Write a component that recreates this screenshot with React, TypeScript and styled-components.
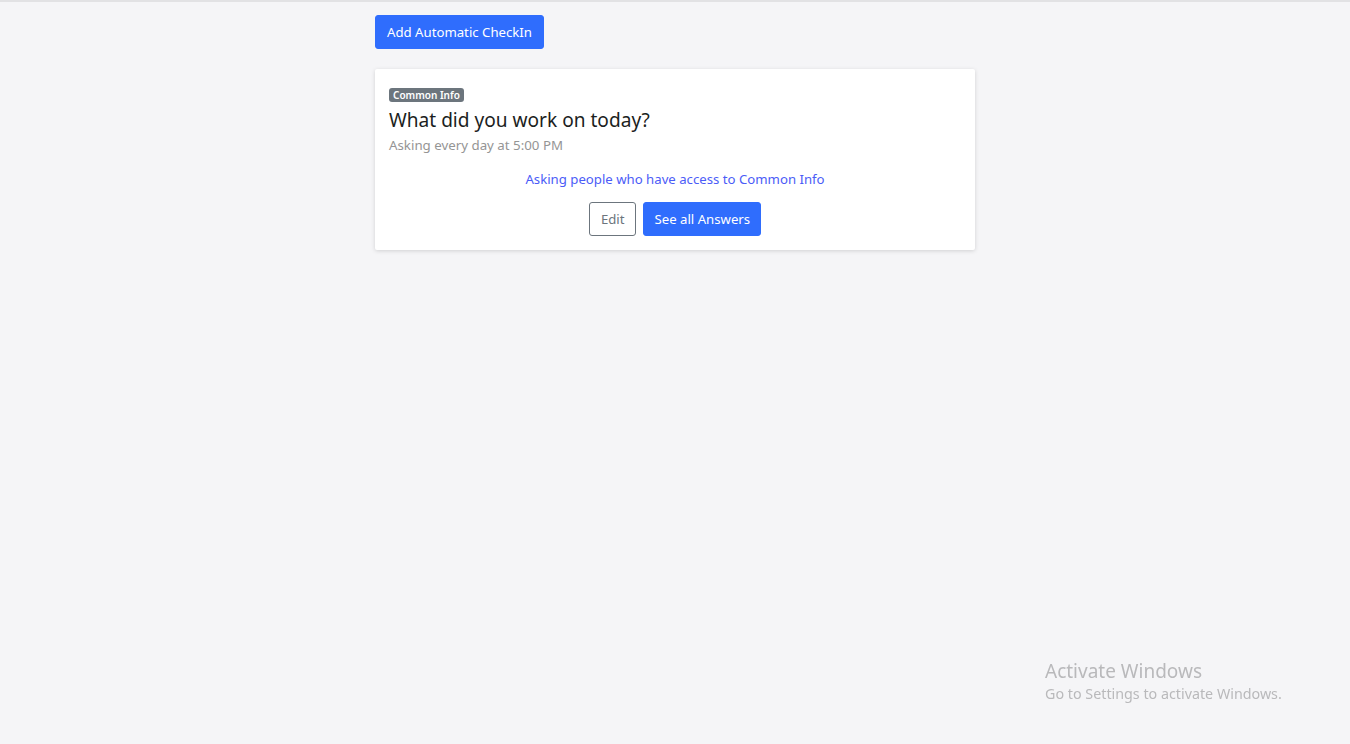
import * as React from "react"
import styled, { createGlobalStyle } from "styled-components"

const GlobalStyle = createGlobalStyle`
  html, body {
    margin: 0;
    padding: 0;
    background: #f5f5f7;
    font-family: "Noto Sans", "Segoe UI", sans-serif;
    color: #212529;
  }
  body {
    min-height: 744px;
    border-top: 2px solid #e2e2e4;
    box-sizing: border-box;
  }
`

const Page = styled.div`
  width: 600px;
  margin: 0 auto;
  padding-top: 13px;
`

const Button = styled.button<{ $outline?: boolean; $compact?: boolean }>`
  font-family: inherit;
  font-size: 13.2px;
  line-height: 20px;
  border-radius: 3px;
  cursor: pointer;
  padding: ${p => (p.$outline ? "6px 11px" : p.$compact ? "6px 10px" : "6px 11px")};
  height: 34px;
  border: 1px solid ${p => (p.$outline ? "#6c757d" : "#2f6dfd")};
  background: ${p => (p.$outline ? "#fff" : "#2f6dfd")};
  color: ${p => (p.$outline ? "#6c757d" : "#fff")};
`

const Card = styled.div`
  margin-top: 20px;
  background: #fff;
  border-radius: 2px;
  box-shadow: 0 1px 4px rgba(0, 0, 0, 0.15);
  padding: 13px 14px 14px;
`

const Badge = styled.span`
  display: inline-block;
  background: #6c757d;
  color: #fff;
  font-size: 10px;
  font-weight: 600;
  line-height: 14px;
  padding: 0 4px;
  border-radius: 3px;
`

const Title = styled.h2`
  margin: 2px 0 0;
  font-size: 19.1px;
  font-weight: 400;
  line-height: 28px;
  color: #1b1e21;
`

const Schedule = styled.div`
  margin-top: 1px;
  font-size: 13.3px;
  line-height: 20px;
  color: #959595;
`

const Audience = styled.div`
  margin-top: 14px;
  text-align: center;
  font-size: 13.2px;
  line-height: 20px;
  color: #4b5cf7;
`

const Actions = styled.div`
  display: flex;
  justify-content: center;
  gap: 7px;
  margin-top: 13px;
`

const Watermark = styled.div`
  position: fixed;
  left: 1045px;
  top: 658px;
  color: #b9b9bb;
  font-family: "Noto Sans", sans-serif;
`

const WatermarkTitle = styled.div`
  font-size: 19px;
  line-height: 26px;
`

const WatermarkText = styled.div`
  font-size: 14.3px;
  line-height: 20px;
`

export default function App() {
  return (
    <>
      <GlobalStyle />
      <Page>
        <Button>Add Automatic CheckIn</Button>
        <Card>
          <Badge>Common Info</Badge>
          <Title>What did you work on today?</Title>
          <Schedule>Asking every day at 5:00 PM</Schedule>
          <Audience>Asking people who have access to Common Info</Audience>
          <Actions>
            <Button $outline>Edit</Button>
            <Button $compact>See all Answers</Button>
          </Actions>
        </Card>
      </Page>
      <Watermark>
        <WatermarkTitle>Activate Windows</WatermarkTitle>
        <WatermarkText>Go to Settings to activate Windows.</WatermarkText>
      </Watermark>
    </>
  )
}
